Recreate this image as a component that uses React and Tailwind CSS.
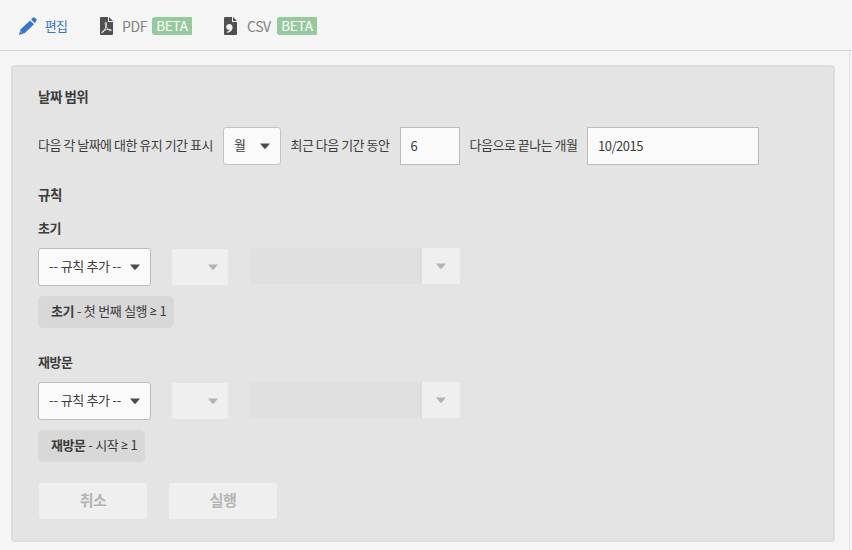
import React from 'react';

function Caret({ muted = false }) {
  return (
    <svg viewBox="0 0 10 6" className={`h-[6px] w-[10px] shrink-0 ${muted ? 'fill-[#b3b3b3]' : 'fill-[#4b4b4b]'}`}>
      <path d="M0 .5h10L5.8 5.4Q5 6 4.2 5.4Z" />
    </svg>
  );
}

function PencilIcon() {
  return (
    <svg viewBox="0 0 18 18" className="h-[18px] w-[18px] fill-[#3675c8]">
      <path d="M0 18l1.700-5.700 9.400-8.900 3.900 3.900-9.400 9z" />
      <path d="M12.100 2.400L13.800.7q1-1 2.100 0l1.300 1.300q1.100 1.100 0 2.100L15.900 6.200z" />
      <path d="M1.500 14.200l2.300 2.300" className="stroke-[#c3d6ef] [stroke-width:.6]" />
    </svg>
  );
}

function PdfIcon() {
  return (
    <svg viewBox="0 0 13 18" className="h-[18px] w-[13px]">
      <path d="M1 0h7v5h5v12q0 1-1 1H1q-1 0-1-1V1q0-1 1-1z" className="fill-[#505050]" />
      <path d="M9 0l4 4H9z" className="fill-[#505050]" />
      <path
        d="M5.700 5.200c-.8 0-.5 2 .1 3.600.6 1.700 2.200 4.200 4.400 4.800 1.200.3 1.700-.7.500-1.100-2.100-.7-6.300.400-8.300 2-1.200 1-.4 1.900.500.900C4.600 13.600 6.500 9.400 6.500 6.500c0-.8-.3-1.300-.8-1.300z"
        className="fill-none stroke-[#f5f5f5] [stroke-width:.9]"
      />
    </svg>
  );
}

function CsvIcon() {
  return (
    <svg viewBox="0 0 13 18" className="h-[18px] w-[13px]">
      <path d="M1 0h7v5h5v12q0 1-1 1H1q-1 0-1-1V1q0-1 1-1z" className="fill-[#505050]" />
      <path d="M9 0l4 4H9z" className="fill-[#505050]" />
      <path
        d="M5.300 7c1.900 0 3.300 1.300 3.300 3.500 0 3-2.100 4.800-5.600 5.300l-.3-1.100c1.600-.4 2.500-1.100 2.800-2-2 .3-3.300-1-3.300-2.800 0-1.700 1.300-2.900 3.100-2.900z"
        className="fill-[#f5f5f5]"
      />
    </svg>
  );
}

function Beta() {
  return (
    <span className="flex h-[18px] w-10 items-center justify-center rounded-l-[3px] rounded-r-[1px] bg-[#96c99d] text-[13.5px] tracking-[-0.2px] text-white">
      BETA
    </span>
  );
}

function Toolbar() {
  return (
    <header className="flex h-[51px] items-center border-b border-[#d2d2d2] pl-[19px] pt-px text-[14px] leading-none tracking-[-0.4px] text-[#828282]">
      <button className="flex items-center gap-[7px] text-[#3675c8]">
        <PencilIcon />
        <span className="w-6 whitespace-nowrap pb-px text-[13px] tracking-[-0.6px]">편집</span>
      </button>
      <button className="ml-8 flex items-center">
        <PdfIcon />
        <span className="ml-[9px] mr-[5px] w-[25px] text-left">PDF</span>
        <Beta />
      </button>
      <button className="ml-8 flex items-center">
        <CsvIcon />
        <span className="ml-[10px] mr-[5px] w-[25px] text-left">CSV</span>
        <Beta />
      </button>
    </header>
  );
}

function RuleGroup({ title, rule }) {
  return (
    <section>
      <h3 className="h-5 font-bold leading-5">{title}</h3>
      <div className="mt-[10px] flex h-[38px] items-start">
        <button className="flex h-[38px] w-[113px] items-center rounded-[3px] border border-[#bdbdbd] bg-[#fafafa] pl-[10px]">
          <span className="w-[81px] whitespace-nowrap pb-[3px] text-left [word-spacing:0.4px]">
            <span className="tracking-normal">--</span> 규칙 추가 <span className="tracking-normal">--</span>
          </span>
          <Caret />
        </button>
        <button disabled className="ml-[21px] mt-px flex h-9 w-14 items-center justify-end rounded-[2px] bg-[#efefef] pr-[10px]">
          <Caret muted />
        </button>
        <div className="ml-[22px] flex h-9 w-[210px]">
          <div className="w-[172px] rounded-l-[2px] border-r-2 border-[#dddddd] bg-[#e0e0e0]" />
          <button disabled className="flex w-[38px] items-center justify-center bg-[#efefef]">
            <Caret muted />
          </button>
        </div>
      </div>
      <div className="mt-[10px] flex">
        <div className="flex h-8 items-center whitespace-pre rounded-[5px] bg-[#d8d8d8] pb-[3px] pl-[13px] pr-2 [word-spacing:0.55px]">
          <b>{title}</b> - {rule} <span className="font-['Open_Sans'] text-[12px] font-semibold">≥</span> 1
        </div>
      </div>
    </section>
  );
}

export default function App() {
  return (
    <div className="flex h-[550px] w-[852px] flex-col overflow-hidden bg-[#f5f5f5] font-['Noto_Sans_CJK_KR',sans-serif] text-[13px] tracking-[-0.5px] text-[#3c3c3c]">
      <Toolbar />
      <div className="mr-[2px] flex-1 border-r border-[#e2e2e2] pl-[11px] pt-[14px]">
        <main className="h-[477px] w-[824px] rounded-[4px] border-2 border-[#dddddd] bg-[#e4e4e4] pl-[25px] pt-5">
          <h2 className="-mt-px h-5 text-[13.5px] font-bold leading-5">날짜 범위</h2>
          <div className="mt-[21px] flex h-[38px] items-center whitespace-nowrap">
            <span className="w-[185px] pb-[3px]">다음 각 날짜에 대한 유지 기간 표시</span>
            <button className="flex h-[38px] w-[58px] items-center justify-between rounded-[3px] border border-[#c3c3c3] bg-[#fafafa] px-[10px]">
              <span className="pb-[3px]">월</span> <Caret />
            </button>
            <span className="ml-[9.500px] w-[109.500px] pb-[3px]">최근 다음 기간 동안</span>
            <div className="flex h-[38px] w-[60px] items-center border border-[#bcbcbc] bg-[#fafafa] pb-px pl-[9.500px]">6</div>
            <span className="ml-[9.500px] w-[117.500px] pb-[3px]">다음으로 끝나는 개월</span>
            <div className="flex h-[38px] w-[172px] items-center border border-[#bcbcbc] bg-[#fafafa] pb-px pl-[10px]">10/2015</div>
          </div>
          <h2 className="mt-[19px] h-5 text-[13.5px] font-bold leading-5">규칙</h2>
          <div className="mt-[14px] flex flex-col gap-6">
            <RuleGroup title="초기" rule="첫 번째 실행" />
            <RuleGroup title="재방문" rule="시작" />
          </div>
          <div className="mt-[21px] flex gap-[22px] pl-px text-[15px] font-bold text-[#b4b4b4]">
            <button disabled className="h-9 w-[108px] rounded-[2px] bg-[#efefef] pb-0.5">취소</button>
            <button disabled className="h-9 w-[108px] rounded-[2px] bg-[#efefef] pb-0.5">실행</button>
          </div>
        </main>
      </div>
    </div>
  );
}
